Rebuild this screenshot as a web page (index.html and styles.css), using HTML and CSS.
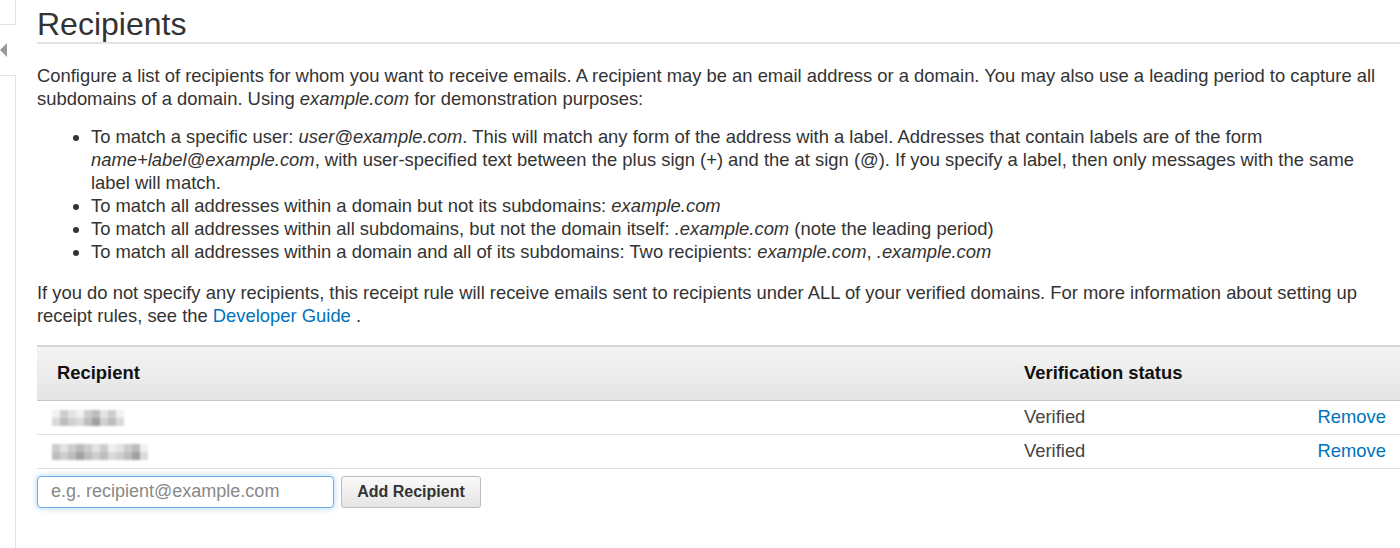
FILE: index.html
```html
<!DOCTYPE html>
<html lang="en">
<head>
    <meta charset="UTF-8">
    <title>Recipients</title>
    <link rel="stylesheet" href="styles.css">
</head>
<body>

<div class="page">
    <div class="sidebar">
        <div class="sidebar-top"></div>
        <div class="sidebar-toggle"><span class="arrow"></span></div>
        <div class="sidebar-rest"></div>
    </div>

    <div class="content">
        <h2 class="title">Recipients</h2>

        <p class="intro">Configure a list of recipients for whom you want to receive emails. A recipient may be an email address or a domain. You may also use a leading period to capture all subdomains of a domain. Using <em>example.com</em> for demonstration purposes:</p>

        <ul class="rules">
            <li>To match a specific user: <em>user@example.com</em>. This will match any form of the address with a label. Addresses that contain labels are of the form <em>name+label@example.com</em>, with user-specified text between the plus sign (+) and the at sign (@). If you specify a label, then only messages with the same label will match.</li>
            <li>To match all addresses within a domain but not its subdomains: <em>example.com</em></li>
            <li>To match all addresses within all subdomains, but not the domain itself: <em>.example.com</em> (note the leading period)</li>
            <li>To match all addresses within a domain and all of its subdomains: Two recipients: <em>example.com</em>, <em>.example.com</em></li>
        </ul>

        <p class="note">If you do not specify any recipients, this receipt rule will receive emails sent to recipients under ALL of your verified domains. For more information about setting up receipt rules, see the <a href="#">Developer Guide</a> .</p>

        <table class="recipients">
            <thead>
                <tr>
                    <th class="col-name">Recipient</th>
                    <th class="col-status">Verification status</th>
                    <th class="col-action"></th>
                </tr>
            </thead>
            <tbody>
                <tr>
                    <td class="col-name">
                        <span class="blur">
                            <i class="px p3"></i><i class="px p2"></i><i class="px p1"></i><i class="px p3"></i><i class="px p2"></i><i class="px p4"></i><i class="px p1"></i><i class="px p2"></i><i class="px p3"></i>
                        </span>
                    </td>
                    <td class="col-status">Verified</td>
                    <td class="col-action"><a href="#">Remove</a></td>
                </tr>
                <tr>
                    <td class="col-name">
                        <span class="blur">
                            <i class="px p2"></i><i class="px p1"></i><i class="px p2"></i><i class="px p4"></i><i class="px p2"></i><i class="px p1"></i><i class="px p2"></i><i class="px p3"></i><i class="px p1"></i><i class="px p2"></i><i class="px p4"></i><i class="px p3"></i>
                        </span>
                    </td>
                    <td class="col-status">Verified</td>
                    <td class="col-action"><a href="#">Remove</a></td>
                </tr>
            </tbody>
        </table>

        <div class="add-row">
            <input type="text" class="add-input" placeholder="e.g. recipient@example.com">
            <button class="add-btn">Add Recipient</button>
        </div>
    </div>
</div>

</body>
</html>
```

FILE: styles.css
```css
body {
    margin: 0;
    font-family: "Liberation Sans", Arial, sans-serif;
    font-size: 18.4px;
    color: #333;
    background: #fff;
}

.page {
    display: flex;
    min-height: 548px;
}

.sidebar {
    width: 16px;
    flex-shrink: 0;
    display: flex;
    flex-direction: column;
}

.sidebar-top {
    height: 24px;
    border-right: 1px solid #e3e3e3;
    border-bottom: 1px solid #e3e3e3;
}

.sidebar-toggle {
    height: 50px;
    display: flex;
    align-items: center;
}

.arrow {
    width: 0;
    height: 0;
    border-top: 7px solid transparent;
    border-bottom: 7px solid transparent;
    border-right: 7px solid #999;
}

.sidebar-rest {
    flex: 1;
    border-right: 1px solid #e3e3e3;
    border-top: 1px solid #e3e3e3;
}

.content {
    flex: 1;
    padding-left: 21px;
    min-width: 0;
}

.title {
    margin: 0;
    padding-top: 6px;
    padding-bottom: 0;
    font-size: 32px;
    font-weight: normal;
    line-height: 36px;
    color: #333;
    border-bottom: 2px solid #e3e3e3;
}

p {
    line-height: 23px;
}

.intro {
    margin: 20px 0 0;
}

.note {
    margin: 18px 0 0;
}

.rules {
    margin: 15px 0 0;
    padding-left: 54px;
    padding-right: 12px;
    line-height: 23px;
}

a {
    color: #0073bb;
    text-decoration: none;
}

.recipients {
    width: 100%;
    margin-top: 18px;
    border-collapse: collapse;
    table-layout: fixed;
}

.recipients th,
.recipients td {
    box-sizing: border-box;
}

.recipients th {
    height: 54px;
    padding: 0 20px;
    text-align: left;
    font-weight: bold;
    color: #111;
    background: linear-gradient(to bottom, #f4f4f4, #e4e4e4);
    border-top: 2px solid #d5d5d5;
    border-bottom: 1px solid #c8c8c8;
}

.recipients td {
    height: 34px;
    padding: 0 20px;
    border-bottom: 1px solid #e1e1e1;
    color: #444;
}

.recipients .col-name {
    width: 967px;
}

.recipients td.col-name {
    padding-left: 15px;
}

.recipients .col-status {
    width: 250px;
}

.recipients .col-action {
    text-align: right;
    padding-right: 14px;
}

.blur {
    display: inline-flex;
    vertical-align: middle;
    filter: blur(1.2px);
}

.px {
    display: inline-block;
    width: 8px;
    height: 16px;
}

.p1 { background: linear-gradient(#e4e4e4 50%, #cfcfcf 50%); }
.p2 { background: linear-gradient(#cdcdcd 50%, #bdbdbd 50%); }
.p3 { background: linear-gradient(#f0f0f0 50%, #dadada 50%); }
.p4 { background: linear-gradient(#bcbcbc 50%, #a0a0a0 50%); }

.add-row {
    display: flex;
    gap: 7px;
    margin-top: 7px;
}

.add-input {
    box-sizing: border-box;
    width: 297px;
    height: 32px;
    padding: 0 13px;
    border: 1px solid #6aaef0;
    border-radius: 4px;
    box-shadow: 0 0 6px rgba(80, 150, 230, 0.45);
    font-family: "Liberation Sans", Arial, sans-serif;
    font-size: 18px;
    color: #333;
    outline: none;
}

.add-input::placeholder {
    color: #888;
}

.add-btn {
    box-sizing: border-box;
    width: 140px;
    height: 32px;
    padding: 0;
    border: 1px solid #bcbcbc;
    border-radius: 3px;
    background: linear-gradient(to bottom, #fafafa, #e5e5e5);
    font-family: "Liberation Sans", Arial, sans-serif;
    font-size: 16px;
    font-weight: bold;
    color: #333;
}
```
